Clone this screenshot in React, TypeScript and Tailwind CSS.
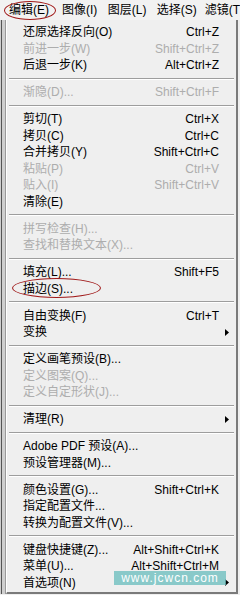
import React from "react";

type Item =
  | { sep: true }
  | { label: string; shortcut?: string; disabled?: boolean; arrow?: boolean; sep?: false };

const items: Item[] = [
  { label: "还原选择反向(O)", shortcut: "Ctrl+Z" },
  { label: "前进一步(W)", shortcut: "Shift+Ctrl+Z", disabled: true },
  { label: "后退一步(K)", shortcut: "Alt+Ctrl+Z" },
  { sep: true },
  { label: "渐隐(D)...", shortcut: "Shift+Ctrl+F", disabled: true },
  { sep: true },
  { label: "剪切(T)", shortcut: "Ctrl+X" },
  { label: "拷贝(C)", shortcut: "Ctrl+C" },
  { label: "合并拷贝(Y)", shortcut: "Shift+Ctrl+C" },
  { label: "粘贴(P)", shortcut: "Ctrl+V", disabled: true },
  { label: "贴入(I)", shortcut: "Shift+Ctrl+V", disabled: true },
  { label: "清除(E)" },
  { sep: true },
  { label: "拼写检查(H)...", disabled: true },
  { label: "查找和替换文本(X)...", disabled: true },
  { sep: true },
  { label: "填充(L)...", shortcut: "Shift+F5" },
  { label: "描边(S)..." },
  { sep: true },
  { label: "自由变换(F)", shortcut: "Ctrl+T" },
  { label: "变换", arrow: true },
  { sep: true },
  { label: "定义画笔预设(B)..." },
  { label: "定义图案(Q)...", disabled: true },
  { label: "定义自定形状(J)...", disabled: true },
  { sep: true },
  { label: "清理(R)", arrow: true },
  { sep: true },
  { label: "Adobe PDF 预设(A)..." },
  { label: "预设管理器(M)..." },
  { sep: true },
  { label: "颜色设置(G)...", shortcut: "Shift+Ctrl+K" },
  { label: "指定配置文件..." },
  { label: "转换为配置文件(V)..." },
  { sep: true },
  { label: "键盘快捷键(Z)...", shortcut: "Alt+Shift+Ctrl+K" },
  { label: "菜单(U)...", shortcut: "Alt+Shift+Ctrl+M" },
  { label: "首选项(N)", arrow: true },
];

function Arrow() {
  return (
    <svg width="4" height="7" viewBox="0 0 4 7" className="block">
      <path d="M0 0 L4 3.5 L0 7 Z" fill="#000" />
    </svg>
  );
}

export default function App() {
  return (
    <div
      className="relative w-[240px] h-[595px] overflow-hidden bg-[#efefef] text-[12px] leading-none text-black"
      style={{ fontFamily: '"Liberation Sans", "Noto Sans CJK SC", sans-serif' }}
    >
      {/* menu bar */}
      <div className="flex h-[20px] items-center bg-[#f2f2f2]">
        <span className="ml-[9px] w-[53px]">编辑(E)</span>
        <span className="w-[46px]">图像(I)</span>
        <span className="w-[49px]">图层(L)</span>
        <span className="w-[48px]">选择(S)</span>
        <span className="whitespace-nowrap">滤镜(T</span>
      </div>

      <div className="flex h-[574px]">
        {/* left background strip */}
        <div className="w-[6px] border-r border-[#9a9a9a] bg-[#cfcfcf]">
          <div className="ml-[1px] h-full w-[1px] bg-[#555]" />
        </div>
        {/* dropdown */}
        <div className="flex w-[232px] flex-col border-b-2 border-r-2 border-[#7a7a7a] border-l border-l-white bg-[#efefef] pt-[4px]">
          {items.map((it, i) =>
            it.sep ? (
              <div key={i} className="flex h-[10.5px] items-center px-[2px]">
                <div className="w-full border-t border-b border-t-[#9d9d9d] border-b-white" />
              </div>
            ) : (
              <div
                key={i}
                className={`flex h-[16.5px] items-center pl-[16px] pr-[17px] whitespace-nowrap ${
                  it.disabled ? "text-[#adadad]" : "text-black"
                }`}
              >
                <span className="flex-1">{it.label}</span>
                {it.shortcut && <span>{it.shortcut}</span>}
                {it.arrow && (
                  <span className="-mr-[10px]">
                    <Arrow />
                  </span>
                )}
              </div>
            )
          )}
        </div>
      </div>

      {/* red ellipse around 编辑 */}
      <div className="pointer-events-none absolute left-[4px] top-[1px] h-[19px] w-[52px] rounded-[50%] border-[1.5px] border-[#a01818]" />
      {/* red ellipse around 描边 */}
      <div className="pointer-events-none absolute left-[12px] top-[278px] h-[20px] w-[89px] rounded-[50%] border-[1.5px] border-[#a01818]" />

      {/* watermark */}
      <div className="pointer-events-none absolute left-[114px] top-[571px] flex h-[14px] w-[112px] items-center justify-center bg-[#6fbfbf]/80 text-[12px] tracking-[1px] text-white">
        www.jcwcn.com
      </div>
    </div>
  );
}
